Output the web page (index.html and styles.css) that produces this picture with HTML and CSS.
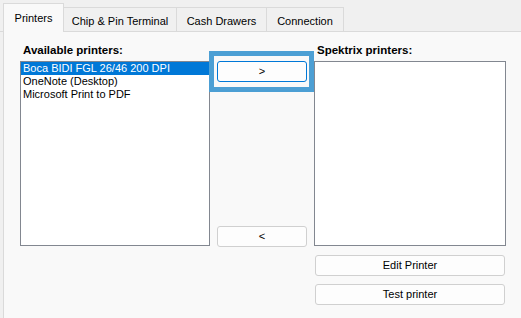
FILE: index.html
```html
<!DOCTYPE html>
<html>
<head>
<meta charset="utf-8">
<link rel="stylesheet" href="styles.css">
</head>
<body>
<div class="window">
  <div class="tabstrip">
    <div class="tab tab-active tab-printers">Printers</div>
    <div class="tab tab-chip">Chip &amp; Pin Terminal</div>
    <div class="tab tab-cash">Cash Drawers</div>
    <div class="tab tab-conn">Connection</div>
  </div>
  <div class="panel">
    <div class="col col-left">
      <div class="label">Available printers:</div>
      <div class="listbox">
        <div class="item selected">Boca BIDI FGL 26/46 200 DPI</div>
        <div class="item">OneNote (Desktop)</div>
        <div class="item">Microsoft Print to PDF</div>
      </div>
    </div>
    <div class="col col-mid">
      <button class="btn btn-focus">&gt;</button>
      <button class="btn btn-back">&lt;</button>
      <div class="highlight"></div>
    </div>
    <div class="col col-right">
      <div class="label">Spektrix printers:</div>
      <div class="listbox"></div>
      <button class="btn btn-wide btn-edit">Edit Printer</button>
      <button class="btn btn-wide btn-test">Test printer</button>
    </div>
  </div>
</div>
</body>
</html>
```

FILE: styles.css
```css
* { box-sizing: border-box; }
html, body {
  margin: 0;
  padding: 0;
  background: #f0f0f0;
  width: 521px;
  height: 318px;
  overflow: hidden;
  font-family: "Liberation Sans", Arial, sans-serif;
  font-size: 11px;
  color: #000;
}
.window {
  width: 521px;
  height: 318px;
  display: flex;
  flex-direction: column;
}
.tabstrip {
  height: 32px;
  padding-left: 3px;
  display: flex;
  align-items: flex-end;
  border-bottom: 1px solid #dadada;
  flex: none;
}
.tab {
  height: 25px;
  padding-top: 7px;
  margin-bottom: -1px;
  border: 1px solid #dadada;
  border-left: none;
  background: #f0f0f0;
  text-align: center;
  white-space: nowrap;
  color: #000;
}
.tab-active {
  height: 29px;
  padding-top: 8px;
  border-left: 1px solid #dadada;
  border-bottom: none;
  background: #f9f9f9;
  position: relative;
  z-index: 1;
}
.tab-printers { width: 61px; }
.tab-chip { width: 113px; }
.tab-cash { width: 90px; }
.tab-conn { width: 77px; }
.panel {
  flex: 1;
  margin-left: 3px;
  border-left: 1px solid #dadada;
  background: #f9f9f9;
  display: flex;
  padding: 12px 0 0 16px;
}
.col { display: flex; flex-direction: column; }
.col-left { width: 190px; }
.col-mid {
  width: 104px;
  position: relative;
  padding: 17px 0 0 7px;
}
.col-right { width: 192px; }
.label {
  font-weight: bold;
  font-size: 11.5px;
  height: 13px;
  line-height: 13px;
  padding-left: 3px;
  margin-bottom: 4px;
  white-space: nowrap;
}
.listbox {
  height: 185px;
  border: 1px solid #828790;
  background: #fff;
}
.item {
  height: 13px;
  line-height: 13px;
  padding-left: 2px;
  white-space: nowrap;
}
.item.selected {
  background: #0078d7;
  color: #fff;
}
.btn {
  font-family: "Liberation Sans", Arial, sans-serif;
  font-size: 11px;
  color: #000;
  height: 21px;
  width: 90px;
  padding: 0;
  background: #fdfdfd;
  border: 1px solid #d0d0d0;
  border-radius: 3px;
  line-height: 19px;
  text-align: center;
}
.btn-focus {
  border-color: #0078d7;
}
.btn-back {
  margin-top: 144px;
}
.btn-wide {
  width: 190px;
  margin-left: 1px;
}
.btn-edit { margin-top: 9px; }
.btn-test { margin-top: 8px; }
.highlight {
  position: absolute;
  left: -1px;
  top: 7px;
  width: 105px;
  height: 41px;
  border: 5px solid #4c9fd4;
  pointer-events: none;
}
```
